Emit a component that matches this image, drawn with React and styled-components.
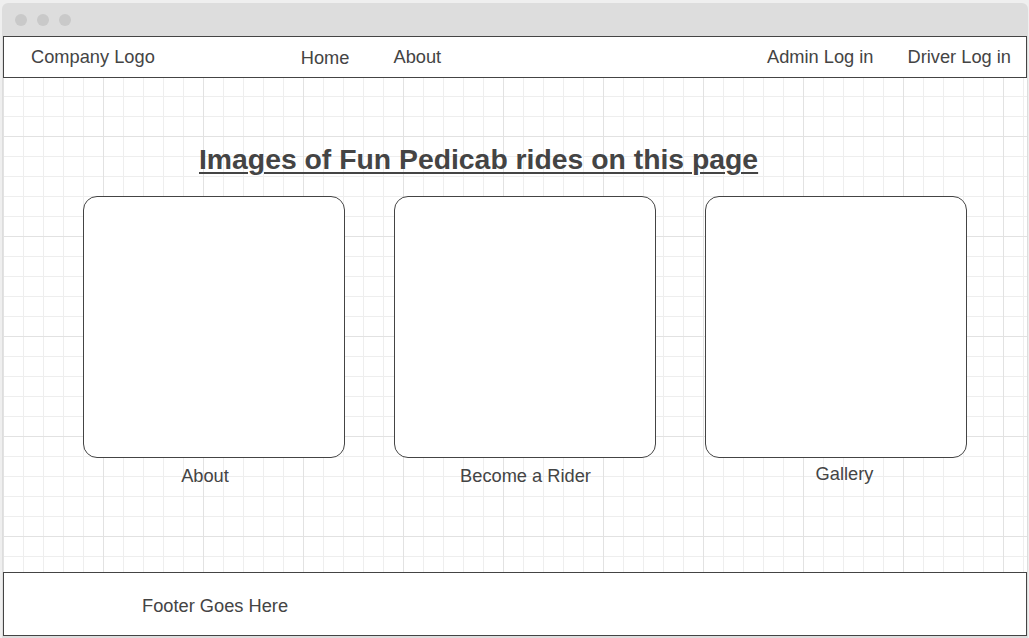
import React from "react";
import styled, { createGlobalStyle } from "styled-components";

const GlobalStyle = createGlobalStyle`
  html, body {
    margin: 0;
    padding: 0;
    background: #efefef;
    font-family: "Liberation Sans", Arial, sans-serif;
    color: #444;
  }
  * { box-sizing: border-box; }
`;

const Page = styled.div`
  width: 1029px;
  height: 638px;
  padding: 3px 1px 0 2px;
  overflow: hidden;
`;

const Window = styled.div`
  height: 635px;
  background: #dddddd;
  border-radius: 6px 6px 0 0;
  display: flex;
  flex-direction: column;
  padding-bottom: 2px;
`;

const TitleBar = styled.div`
  height: 33px;
  flex: none;
  display: flex;
  align-items: center;
  gap: 10px;
  padding-left: 13px;
`;

const Dot = styled.span`
  width: 12px;
  height: 12px;
  border-radius: 50%;
  background: #c9c9c9;
`;

const Body = styled.div`
  flex: 1;
  margin: 0 1px 0 1px;
  display: flex;
  flex-direction: column;
  background-color: #fff;
  background-image:
    linear-gradient(to right, #e2e2e2 1px, transparent 1px),
    linear-gradient(to bottom, #e2e2e2 1px, transparent 1px),
    linear-gradient(to right, #eeeeee 1px, transparent 1px),
    linear-gradient(to bottom, #eeeeee 1px, transparent 1px);
  background-size: 100px 100px, 100px 100px, 20px 20px, 20px 20px;
`;

const Nav = styled.nav`
  height: 42px;
  flex: none;
  border: 1px solid #444;
  background: #fff;
  display: flex;
  align-items: center;
  padding: 0 15px 2px 27px;
  font-size: 18.25px;
`;

const NavGroup = styled.div`
  display: flex;
  align-items: center;
  gap: ${(p) => p.$gap}px;
  margin-left: ${(p) => p.$offset || 0}px;
`;

const NavLink = styled.span`
  line-height: 21px;
  color: #444;
  white-space: nowrap;
  position: relative;
  top: ${(p) => p.$dy || 0}px;
`;

const Spacer = styled.div`
  flex: 1;
`;

const Main = styled.main`
  flex: 1;
  padding: 66px 0 0 0;
  display: flex;
  flex-direction: column;
`;

const Title = styled.h1`
  margin: 0 0 0 196px;
  font-size: 28.35px;
  line-height: 30px;
  font-weight: 700;
  text-decoration: underline;
  text-underline-offset: 3px;
  text-decoration-thickness: 2px;
  color: #444;
  white-space: nowrap;
`;

const CardRow = styled.div`
  margin: 22px 0 0 80px;
  display: grid;
  grid-template-columns: repeat(3, 262px);
  column-gap: 49px;
`;

const CardItem = styled.div`
  display: flex;
  flex-direction: column;
  align-items: center;
`;

const Card = styled.div`
  width: 262px;
  height: 262px;
  border: 1px solid #444;
  border-radius: 14px;
  background: #fff;
`;

const CardLabel = styled.div`
  margin-top: ${(p) => 7 + (p.$dy || 0)}px;
  font-size: 18.25px;
  line-height: 21px;
  color: #444;
  transform: translateX(${(p) => p.$dx || 0}px);
`;

const Footer = styled.footer`
  height: 64px;
  flex: none;
  border: 1px solid #444;
  background: #fff;
  display: flex;
  align-items: center;
  padding: 4px 0 0 138px;
  font-size: 18.25px;
`;

const cards = [
  { label: "About", dx: -9, dy: 0 },
  { label: "Become a Rider", dx: 0.5, dy: 0 },
  { label: "Gallery", dx: 8.5, dy: -2 },
];

export default function App() {
  return (
    <>
      <GlobalStyle />
      <Page>
        <Window>
          <TitleBar>
            <Dot />
            <Dot />
            <Dot />
          </TitleBar>
          <Body>
            <Nav>
              <NavLink>Company Logo</NavLink>
              <NavGroup $gap={44} $offset={146}>
                <NavLink $dy={1}>Home</NavLink>
                <NavLink>About</NavLink>
              </NavGroup>
              <Spacer />
              <NavGroup $gap={34}>
                <NavLink>Admin Log in</NavLink>
                <NavLink>Driver Log in</NavLink>
              </NavGroup>
            </Nav>
            <Main>
              <Title>Images of Fun Pedicab rides on this page</Title>
              <CardRow>
                {cards.map((c) => (
                  <CardItem key={c.label}>
                    <Card />
                    <CardLabel $dx={c.dx} $dy={c.dy}>
                      {c.label}
                    </CardLabel>
                  </CardItem>
                ))}
              </CardRow>
            </Main>
            <Footer>Footer Goes Here</Footer>
          </Body>
        </Window>
      </Page>
    </>
  );
}
